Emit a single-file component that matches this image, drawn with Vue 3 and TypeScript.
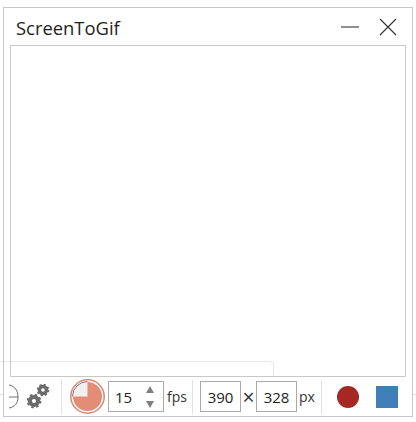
<template>
  <div class="page">
    <div class="behind-card" />
    <div class="behind-line" />
    <section class="window">
      <header class="title-bar">
        <h1 class="title">ScreenToGif</h1>
        <div class="window-buttons">
          <svg width="18" height="18" viewBox="0 0 18 18"><path d="M0 9H18" stroke="#6a6a6a" stroke-width="1.5" /></svg>
          <svg width="18" height="18" viewBox="0 0 18 18"><path d="M1 1L17 17M17 1L1 17" stroke="#333" stroke-width="1.1" fill="none" /></svg>
        </div>
      </header>
      <div class="capture-frame" />
      <footer class="toolbar">
        <div class="tool-group first">
          <svg width="12" height="25" viewBox="0 0 12 25">
            <path d="M1 1C7 2 10 7 10 13C10 19 7 23 1 24M1 13H10" stroke="#6e6e6e" stroke-width="1" fill="none" />
          </svg>
          <svg class="gears" width="24" height="25" viewBox="0 0 24 25">
            <g fill="none" stroke="#6b6b6b">
              <circle cx="7" cy="17" r="4.1" stroke-width="4" />
              <circle cx="7" cy="17" r="6.2" stroke-width="2.2" stroke-dasharray="2.43 2.44" />
              <circle cx="16" cy="6" r="3.5" stroke-width="3.4" />
              <circle cx="16" cy="6" r="5.3" stroke-width="2" stroke-dasharray="2.08 2.08" />
            </g>
          </svg>
        </div>
        <div class="tool-group fps">
          <svg class="timer" width="35" height="35" viewBox="0 0 35 35">
            <circle cx="17.5" cy="17.5" r="16.7" fill="#fff" stroke="#e08a76" stroke-width="1.6" />
            <circle cx="17.5" cy="17.5" r="14.6" fill="#f0f0f0" />
            <path d="M17.5 17.5V3A14.5 14.5 0 1 1 3 17.5Z" fill="#e38c76" />
            <path d="M2.5 17.5A15 15 0 0 1 17.5 2.5" stroke="#777" stroke-width="1" fill="none" />
          </svg>
          <div class="input fps-input">
            <span>15</span>
            <span class="spinner">
              <i class="arrow up" />
              <i class="arrow down" />
            </span>
          </div>
          <span class="unit">fps</span>
        </div>
        <div class="tool-group size">
          <div class="input size-input">390</div>
          <span class="times">×</span>
          <div class="input size-input">328</div>
          <span class="unit px">px</span>
        </div>
        <div class="tool-group actions">
          <span class="record" />
          <span class="stop" />
        </div>
      </footer>
    </section>
  </div>
</template>

<script setup lang="ts">
</script>

<style>
html,
body {
  margin: 0;
  background: #fff;
  overflow: hidden;
}
</style>

<style scoped>
.page {
  position: relative;
  box-sizing: border-box;
  width: 416px;
  height: 422px;
  padding: 7px 3px 5px;
  background: #fff;
  font-family: "Open Sans", "Noto Sans", sans-serif;
  color: #222;
}

/* page content showing through the transparent recorder window */
.behind-card {
  position: absolute;
  left: 0;
  top: 361px;
  width: 274px;
  height: 20px;
  box-sizing: border-box;
  border: 1px solid #e6e6e6;
  border-left: 0;
  border-bottom: 0;
  border-radius: 0 5px 0 0;
}

.behind-line {
  position: absolute;
  left: 0;
  top: 394px;
  width: 416px;
  height: 1px;
  background: #dedede;
}

.window {
  position: relative;
  display: flex;
  flex-direction: column;
  box-sizing: border-box;
  width: 410px;
  height: 410px;
  border: 1px solid #c8c8c8;
  padding: 0 6px;
}

.title-bar {
  display: flex;
  align-items: center;
  justify-content: space-between;
  height: 37px;
  flex-shrink: 0;
  background: #fff;
  margin: 0 -6px;
  padding: 0 6px;
}

.title {
  margin: 2px 0 0 6px;
  font-size: 18.4px;
  font-weight: 400;
  color: #1e1e1e;
}

.window-buttons {
  display: flex;
  gap: 20px;
  margin-right: 9px;
}

.capture-frame {
  height: 332px;
  border: 1px solid #c8c8c8;
  box-sizing: border-box;
  flex-shrink: 0;
}

.toolbar {
  display: flex;
  align-items: center;
  flex: 1;
  margin: 0 -6px;
  background: #fff;
}

.tool-group {
  display: flex;
  align-items: center;
  box-sizing: border-box;
  height: 34px;
  border-right: 1px solid #e2e2e2;
}

.first {
  width: 58px;
  padding-left: 4px;
}

.gears {
  margin-left: 7px;
}

.fps {
  width: 131px;
  padding-left: 8px;
}

.timer {
  flex-shrink: 0;
}

.input {
  box-sizing: border-box;
  display: flex;
  align-items: center;
  height: 31px;
  border: 1px solid #aaa;
  background: #fff;
  font-size: 15px;
  color: #222;
}

.fps-input {
  justify-content: space-between;
  width: 56px;
  margin-left: 3px;
  padding: 0 9px 0 6px;
}

.spinner {
  display: flex;
  flex-direction: column;
  gap: 8px;
}

.arrow {
  display: block;
  width: 0;
  height: 0;
  border-left: 4.5px solid transparent;
  border-right: 4.5px solid transparent;
}

.arrow.up {
  border-bottom: 7px solid #808080;
}

.arrow.down {
  border-top: 7px solid #808080;
}

.unit {
  margin-left: 3px;
  font-size: 14px;
  color: #333;
}

.size {
  width: 129px;
  padding-left: 7px;
}

.size-input {
  justify-content: center;
  width: 41px;
}

.times {
  width: 15px;
  text-align: center;
  font-size: 21px;
  line-height: 18px;
  color: #333;
}

.px {
  margin-left: 2px;
}

.actions {
  border-right: 0;
  gap: 17px;
  padding-left: 15px;
  padding-top: 1px;
}

.record {
  width: 22px;
  height: 22px;
  border-radius: 50%;
  background: #a52822;
}

.stop {
  width: 22px;
  height: 22px;
  background: #3f7eb8;
}
</style>
